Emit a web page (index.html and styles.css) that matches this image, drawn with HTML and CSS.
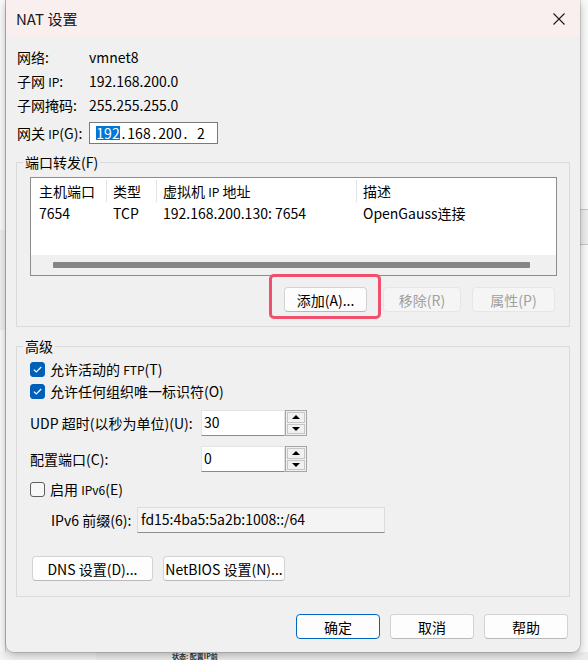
FILE: index.html
```html
<!DOCTYPE html>
<html lang="zh-CN">
<head>
<meta charset="utf-8">
<title>NAT 设置</title>
<link rel="stylesheet" href="styles.css">
</head>
<body>
<div class="backdrop">
  <div class="bd-left"></div>
  <div class="bd-right"></div>
  <div class="bd-bottom"><span class="bd-status">状态: 配置IP前</span></div>
</div>

<div class="dialog">
  <div class="titlebar">
    <span class="title">NAT 设置</span>
    <svg class="close" width="12" height="12" viewBox="0 0 12 12"><path d="M0.5 0.5 L11.5 11.5 M11.5 0.5 L0.5 11.5" stroke="#1a1a1a" stroke-width="1.1" fill="none"/></svg>
  </div>

  <div class="body">
    <div class="info">
      <span>网络:</span><span>vmnet8</span>
      <span>子网 <span class="ip">IP</span>:</span><span>192.168.200.0</span>
      <span>子网掩码:</span><span>255.255.255.0</span>
      <span>网关 <span class="ip">IP</span>(G):</span>
      <div class="ipbox">
        <span class="seg"><span class="sel">192</span></span><span class="dot">.</span>
        <span class="seg">168</span><span class="dot">.</span>
        <span class="seg">200</span><span class="dot">.</span>
        <span class="seg">2</span>
      </div>
    </div>

    <fieldset class="group group-pf">
      <legend>端口转发(F)</legend>
      <div class="list">
        <div class="list-head">
          <div class="col c1">主机端口</div>
          <div class="col c2">类型</div>
          <div class="col c3">虚拟机 <span class="ip">IP</span> 地址</div>
          <div class="col c4">描述</div>
        </div>
        <div class="list-row">
          <div class="col c1">7654</div>
          <div class="col c2">TCP</div>
          <div class="col c3">192.168.200.130: 7654</div>
          <div class="col c4">OpenGauss连接</div>
        </div>
        <div class="list-fill"></div>
        <div class="hscroll"><div class="thumb"></div></div>
      </div>
      <div class="btnrow">
        <span class="hl-wrap"><button class="btn w-add">添加(A)...</button><span class="highlight"></span></span>
        <button class="btn w-rm" disabled>移除(R)</button>
        <button class="btn w-prop" disabled>属性(P)</button>
      </div>
    </fieldset>

    <fieldset class="group group-adv">
      <legend>高级</legend>
      <label class="cbrow first">
        <span class="cb checked"><svg width="15" height="15" viewBox="0 0 15 15"><path d="M3.8 7.6 L6.3 10 L11.2 5" stroke="#fff" stroke-width="1.2" fill="none"/></svg></span>
        <span>允许活动的 <span class="ip">FTP</span>(T)</span>
      </label>
      <label class="cbrow">
        <span class="cb checked"><svg width="15" height="15" viewBox="0 0 15 15"><path d="M3.8 7.6 L6.3 10 L11.2 5" stroke="#fff" stroke-width="1.2" fill="none"/></svg></span>
        <span>允许任何组织唯一标识符(O)</span>
      </label>

      <div class="numrow udp">
        <span class="numlbl">UDP 超时(以秒为单位)(U):</span>
        <span class="numbox">30</span>
        <span class="spin"><span class="sbtn"><span class="tri up"></span></span><span class="sbtn"><span class="tri down"></span></span></span>
      </div>
      <div class="numrow port">
        <span class="numlbl">配置端口(C):</span>
        <span class="numbox">0</span>
        <span class="spin"><span class="sbtn"><span class="tri up"></span></span><span class="sbtn"><span class="tri down"></span></span></span>
      </div>

      <label class="cbrow ipv6cb">
        <span class="cb"></span>
        <span>启用 <span class="ip">IPv6</span>(E)</span>
      </label>

      <div class="prefixrow">
        <span class="prefixlbl">IPv6 前缀(6):</span>
        <span class="prefixbox">fd15:4ba5:5a2b:1008::/64</span>
      </div>

      <div class="dnsrow">
        <button class="btn w-dns">DNS 设置(D)...</button>
        <button class="btn w-nb">NetBIOS 设置(N)...</button>
      </div>
    </fieldset>

    <div class="footer">
      <button class="btn primary">确定</button>
      <button class="btn">取消</button>
      <button class="btn">帮助</button>
    </div>
  </div>
</div>
</body>
</html>
```

FILE: styles.css
```css
* { box-sizing: border-box; }
html, body { margin: 0; padding: 0; }
body {
  width: 588px;
  height: 660px;
  overflow: hidden;
  position: relative;
  background: #f3f3f3;
  font-family: "Noto Sans CJK SC", "Noto Sans", sans-serif;
  font-size: 14px;
  line-height: 20px;
  color: #000;
}

/* background window behind the dialog */
.backdrop { position: absolute; left: 0; top: 0; width: 588px; height: 660px; }
.bd-left {
  position: absolute; left: 0; top: 0; width: 6px; height: 660px;
  background: linear-gradient(#fafafa 0 230px, #f0f0f0 230px 330px, #fafafa 330px);
  border-right: 1px solid #d0d0d0;
}
.bd-right {
  position: absolute; right: 0; top: 0; width: 8px; height: 660px;
  background: linear-gradient(#fafafa 0 209px, #c8c8c8 209px 210px, #eeeeee 210px 244px, #c8c8c8 244px 245px, #fafafa 245px);
}
.bd-bottom {
  position: absolute; left: 0; bottom: 0; width: 588px; height: 8px;
  background: #ececec;
  border-left: 96px solid #f3f3f3;
}
.bd-status {
  position: absolute; left: 76px; top: 0;
  font-size: 7px; line-height: 8px; font-weight: 700; color: #333;
}

/* dialog */
.dialog {
  position: relative;
  margin-left: 6px;
  width: 574px;
  height: 652px;
  background: #f0f0f0;
  border-radius: 0 0 8px 8px;
  box-shadow: 0 0 0 1px rgba(0,0,0,0.12), 0 3px 10px rgba(0,0,0,0.28);
}
.titlebar {
  height: 37px;
  background: #f9efee;
  display: flex;
  align-items: center;
  justify-content: space-between;
  padding: 0 15px 0 10px;
}
.title { font-size: 15px; line-height: 20px; color: #1a1a1a; }
.close { display: block; }

.body { padding: 8px 10px 0; }

.ip { font-size: 12px; }

.info {
  display: grid;
  grid-template-columns: 72px 1fr;
  grid-template-rows: 24px 24px 24px 32px;
  align-items: center;
  padding-left: 1px;
}
.ipbox {
  width: 129px;
  height: 22px;
  border: 1px solid #7a7a7a;
  background: #fff;
  display: flex;
  align-items: center;
  padding-left: 6px;
}
.seg { width: 24px; text-align: center; line-height: 14px; }
.dot { width: 7px; text-align: center; line-height: 14px; }
.sel { background: #0078d7; color: #fff; display: inline-block; }

/* group boxes */
.group {
  margin: 0;
  padding: 0 0 14px 0;
  border: 1px solid #dadada;
  min-width: 0;
}
.group legend {
  margin-left: 6px;
  padding: 0 2px;
  line-height: 20px;
}
.group-pf { margin-top: 3px; }
.group-adv { margin-top: 9px; padding-bottom: 15px; }

/* list view */
.list {
  margin: 5px 12px 0 13px;
  height: 99px;
  border: 1px solid #8c8c8c;
  background: #fff;
  display: flex;
  flex-direction: column;
}
.list-head { height: 26px; display: flex; align-items: center; }
.list-head .col { height: 22px; border-right: 1px solid #e3e3e3; line-height: 22px; }
.list-head .c4 { border-right: none; }
.list-row { height: 18px; display: flex; align-items: center; line-height: 18px; }
.col { padding-left: 6px; white-space: nowrap; }
.c1 { width: 76px; padding-left: 8px; }
.c2 { width: 50px; }
.c3 { width: 200px; }
.c4 { flex: 1; }
.list-fill { height: 33px; }
.hscroll {
  height: 20px;
  background: #f0f0f0;
  padding: 7px 26px 0 22px;
}
.thumb { height: 6px; background: #858585; border-radius: 1px; }

/* buttons */
.btn {
  height: 25px;
  padding: 0;
  font-family: inherit;
  font-size: 14px;
  line-height: 20px;
  color: #000;
  background: #fdfdfd;
  border: 1px solid #d3d3d3;
  border-bottom-color: #b9b9b9;
  border-radius: 4px;
  text-align: center;
}
.btn:disabled {
  background: #f5f5f5;
  border-color: #e6e6e6;
  color: #a0a0a0;
}
.btn.primary { border-color: #0067c0; }

.btnrow {
  margin: 11px 14px 0 0;
  display: flex;
  justify-content: flex-end;
  align-items: center;
}
.hl-wrap { position: relative; display: block; height: 25px; }
.highlight {
  position: absolute;
  left: -15px; right: -14px; top: -13px; bottom: -7px;
  border: 3px solid #f0506e;
  border-radius: 5px;
}
.w-add { width: 83px; }
.w-rm { width: 78px; margin-left: 16px; }
.w-prop { width: 83px; margin-left: 11px; }

/* advanced */
.cbrow {
  margin-left: 13px;
  height: 22px;
  display: flex;
  align-items: center;
  gap: 5px;
}
.cbrow.first { margin-top: 2px; }
.cb {
  width: 15px; height: 15px;
  border-radius: 3px;
  border: 1px solid #5e5e5e;
  background: #f7f7f7;
  display: block;
}
.cb.checked { background: #005fb8; border-color: #005fb8; }
.cb svg { display: block; margin: -1px; }

.numrow {
  margin-left: 13px;
  height: 26px;
  display: flex;
  align-items: center;
}
.numrow.udp { margin-top: 8px; }
.numrow.port { margin-top: 10px; }
.numlbl { width: 171px; }
.numbox {
  width: 84px; height: 26px;
  background: #fff;
  border: 1px solid #e3e3e3;
  border-bottom-color: #8a8a8a;
  padding-left: 2px;
  line-height: 22px;
}
.spin {
  width: 22px; height: 26px;
  border: 1px solid #a5a5a5;
  background: #f0f0f0;
  padding: 1px;
  display: flex;
  flex-direction: column;
  gap: 1px;
}
.sbtn {
  flex: 1;
  border: 1px solid #c6c6c6;
  background: #f0f0f0;
  display: flex;
  align-items: center;
  justify-content: center;
}
.tri { width: 0; height: 0; border-left: 4px solid transparent; border-right: 4px solid transparent; }
.tri.up { border-bottom: 4px solid #000; }
.tri.down { border-top: 4px solid #000; }

.ipv6cb { margin-top: 6px; }

.prefixrow {
  margin: 7px 0 0 34px;
  height: 26px;
  display: flex;
  align-items: center;
}
.prefixlbl { width: 86px; }
.prefixbox {
  width: 248px; height: 26px;
  background: #f4f4f4;
  border: 1px solid #dcdcdc;
  border-bottom-color: #8f8f8f;
  padding-left: 3px;
  line-height: 22px;
}

.dnsrow {
  margin: 23px 0 0 15px;
  display: flex;
  gap: 10px;
}
.w-dns { width: 121px; }
.w-nb { width: 122px; }

.footer {
  margin-top: 17px;
  padding-right: 2px;
  display: flex;
  justify-content: flex-end;
  gap: 10px;
}
.footer .btn { width: 84px; }
```
